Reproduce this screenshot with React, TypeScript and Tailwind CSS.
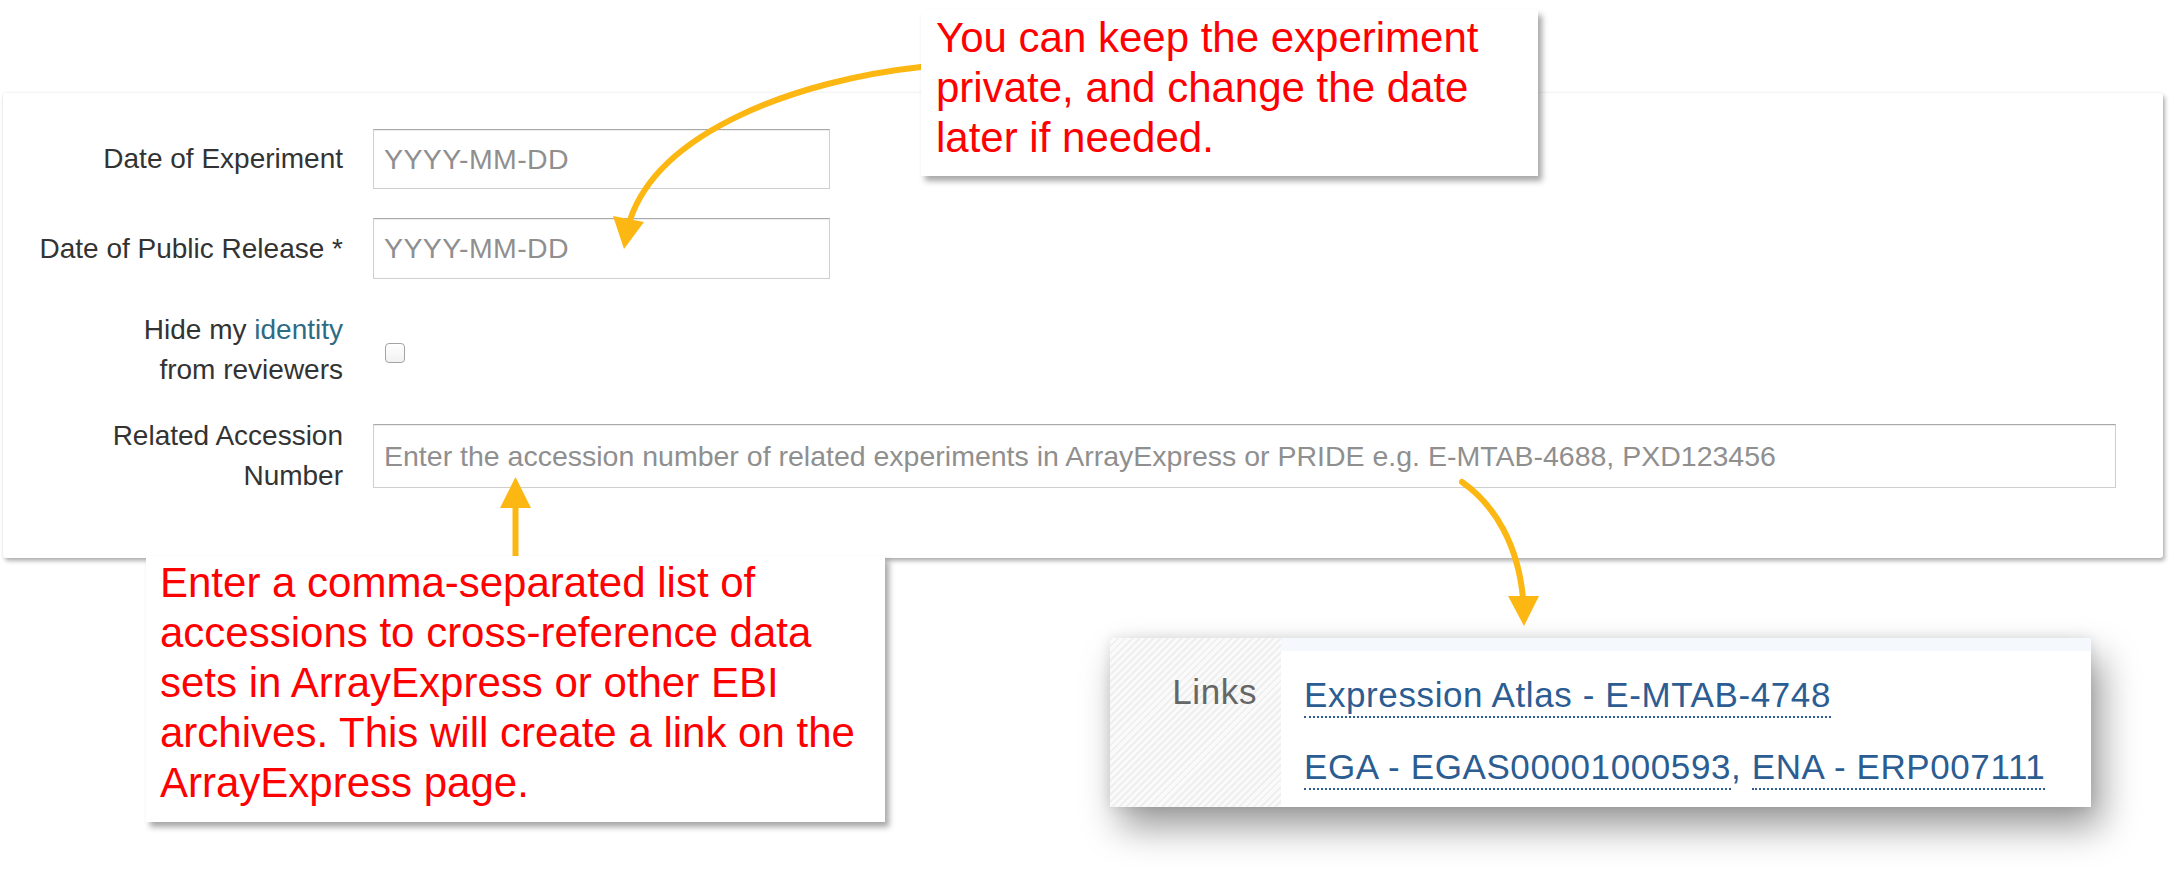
// Annotated walkthrough of the experiment-dates form, with the callouts
// and the resulting "Links" panel from the ArrayExpress page.

const ORANGE = "#fcb712";

function Field({ label, children, height }: { label: React.ReactNode; children: React.ReactNode; height: string }) {
  return (
    <div className={"flex items-center " + height}>
      <div className="w-[340px] shrink-0 text-right text-[28px] leading-[40px] text-[#333]">{label}</div>
      <div className="ml-[30px] flex items-center">{children}</div>
    </div>
  );
}

function TextInput({ placeholder, className }: { placeholder: string; className: string }) {
  return (
    <input
      readOnly
      placeholder={placeholder}
      className={
        "border border-[#cfcfcf] border-t-[#a9a9a9] bg-white px-[10px] text-[28.5px] text-[#333] shadow-[inset_0_1px_1px_rgba(0,0,0,0.075)] outline-none placeholder:text-[#8f8f8f] " +
        className
      }
    />
  );
}

function FormPanel() {
  return (
    <div className="ml-[3px] mt-[93px] h-[465px] w-[2160px] rounded-[3px] bg-white pt-[36px] shadow-[2px_3px_4px_rgba(0,0,0,0.3),0_0_3px_rgba(0,0,0,0.08)]">
      <Field label="Date of Experiment" height="h-[60px]">
        <TextInput placeholder="YYYY-MM-DD" className="h-[60px] w-[457px] tracking-[0.4px]" />
      </Field>
      <div className="h-[29px]" />
      <Field label="Date of Public Release *" height="h-[61px]">
        <TextInput placeholder="YYYY-MM-DD" className="h-[61px] w-[457px] tracking-[0.4px]" />
      </Field>
      <div className="h-[31px]" />
      <Field
        label={
          <>
            Hide my <span className="text-[#2f6b85]">identity</span>
            <br />
            from reviewers
          </>
        }
        height="h-[80px]"
      >
        <span className="ml-[12px] mt-[6px] block h-[20px] w-[20px] rounded-[4px] border border-[#a3a3a3] bg-[linear-gradient(#ffffff,#f1f1f1)]" />
      </Field>
      <div className="h-[26px]" />
      <Field
        label={
          <>
            Related Accession
            <br />
            Number
          </>
        }
        height="h-[80px]"
      >
        <TextInput
          placeholder="Enter the accession number of related experiments in ArrayExpress or PRIDE e.g. E-MTAB-4688, PXD123456"
          className="h-[64px] w-[1743px]"
        />
      </Field>
    </div>
  );
}

function LinksPanel() {
  const link = "border-b-2 border-dotted border-[#2c5d92] pb-[2px] text-[#2c5d92]";
  return (
    <div className="ml-[1110px] mt-[80px] flex h-[169px] w-[981px] bg-white text-[35px] tracking-[0.6px] shadow-[10px_20px_35px_rgba(0,0,0,0.4),0_0_12px_rgba(0,0,0,0.1)]">
      <div className="w-[171px] shrink-0 bg-[repeating-linear-gradient(135deg,#efefef_0px,#efefef_2px,#fafafa_2px,#fafafa_5px)] pr-[24px] pt-[32px] text-right leading-[44px] text-[#666]">
        Links
      </div>
      <div className="flex-1">
        <div className="h-[13px] bg-[#f5f8fc]" />
        <div className="pl-[23px] pt-[22px]">
          <div className="whitespace-nowrap leading-[44px]">
            <span className={link}>Expression Atlas - E-MTAB-4748</span>
          </div>
          <div className="mt-[28px] whitespace-nowrap leading-[44px] text-[#2c5d92]">
            <span className={link}>EGA - EGAS00001000593</span>, <span className={link}>ENA - ERP007111</span>
          </div>
        </div>
      </div>
    </div>
  );
}

function Arrows() {
  return (
    <svg className="pointer-events-none absolute left-0 top-0" width="2177" height="872" viewBox="0 0 2177 872">
      <g fill="none" stroke={ORANGE} strokeWidth="6" strokeLinecap="round">
        <path d="M 921 67 C 800 80, 660 130, 630 220" />
        <path d="M 515.5 556 L 515.5 506" />
        <path d="M 1462 482 C 1495 505, 1518 545, 1523 598" />
      </g>
      <g fill={ORANGE}>
        <polygon points="613,216 644,222 624,249" />
        <polygon points="500,508 531,508 515.5,477" />
        <polygon points="1508,596 1539,596 1524,626" />
      </g>
    </svg>
  );
}

function Callout({ className, lines }: { className: string; lines: string[] }) {
  return (
    <div
      className={
        "absolute bg-white text-[42px] leading-[50px] text-[#ff0000] shadow-[4px_5px_6px_rgba(0,0,0,0.35)] " + className
      }
    >
      {lines.map((l) => (
        <div key={l} className="whitespace-nowrap">
          {l}
        </div>
      ))}
    </div>
  );
}

export default function App() {
  return (
    <div className="relative h-[872px] w-[2177px] overflow-hidden bg-white font-['Liberation_Sans',Arial,sans-serif]">
      <FormPanel />
      <LinksPanel />
      <Arrows />
      <Callout
        className="left-[921px] top-[10px] h-[166px] w-[617px] pl-[15px] pt-[3px]"
        lines={["You can keep the experiment", "private, and change the date", "later if needed."]}
      />
      <Callout
        className="left-[146px] top-[556px] h-[266px] w-[739px] pl-[14px] pt-[2px]"
        lines={[
          "Enter a comma-separated list of",
          "accessions to cross-reference data",
          "sets in ArrayExpress or other EBI",
          "archives. This will create a link on the",
          "ArrayExpress page.",
        ]}
      />
    </div>
  );
}
